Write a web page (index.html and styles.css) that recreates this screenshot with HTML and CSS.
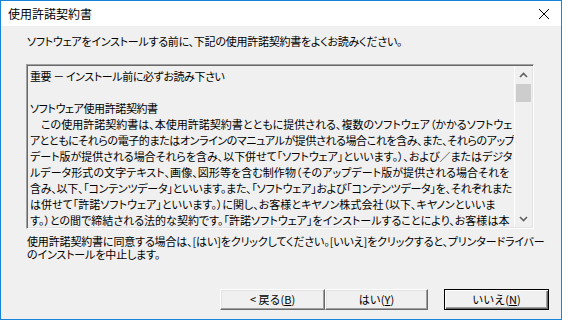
FILE: index.html
```html
<!DOCTYPE html>
<html lang="ja">
<head>
  <meta charset="UTF-8" />
  <title>使用許諾契約書</title>
  <link rel="stylesheet" href="styles.css">
</head>
<body>

<div class="window">
  <div class="titlebar">
    <span class="title">使用許諾契約書</span>
    <svg class="close" width="12" height="12" viewBox="0 0 12 12">
      <path d="M1 1 L11 11 M11 1 L1 11" stroke="#000" stroke-width="1" fill="none" />
    </svg>
  </div>

  <div class="client">
    <p class="intro">ソフトウェアをインストールする前に、下記の使用許諾契約書をよくお読みください。</p>

    <div class="license">
      <div class="license-text">
        <div class="line">重要 － インストール前に必ずお読み下さい</div>
        <div class="line">&nbsp;</div>
        <div class="line">ソフトウェア使用許諾契約書</div>
        <div class="line full">　この使用許諾契約書は、本使用許諾契約書とともに提供される、複数のソフトウェア（かかるソフトウェ</div>
        <div class="line full">アとともにそれらの電子的またはオンラインのマニュアルが提供される場合これを含み、また、それらのアップ</div>
        <div class="line full">デート版が提供される場合それらを含み、以下併せて「ソフトウェア」といいます。）、および／またはデジタ</div>
        <div class="line full short">ルデータ形式の文字テキスト、画像、図形等を含む制作物（そのアップデート版が提供される場合それを</div>
        <div class="line full">含み、以下、「コンテンツデータ」といいます。また、「ソフトウェア」および「コンテンツデータ」を、それぞれまた</div>
        <div class="line full shorter">は併せて「許諾ソフトウェア」といいます。）に関し、お客様とキヤノン株式会社（以下、キヤノンといいま</div>
        <div class="line full short">す。）との間で締結される法的な契約です。「許諾ソフトウェア」をインストールすることにより、お客様は本</div>
      </div>
      <div class="scrollbar">
        <div class="arrow">
          <svg width="9" height="6" viewBox="0 0 9 6"><path d="M1 5 L4.5 1.5 L8 5" stroke="#606060" stroke-width="1.6" fill="none" /></svg>
        </div>
        <div class="track"><div class="thumb"></div></div>
        <div class="arrow">
          <svg width="9" height="6" viewBox="0 0 9 6"><path d="M1 1 L4.5 4.5 L8 1" stroke="#606060" stroke-width="1.6" fill="none" /></svg>
        </div>
      </div>
    </div>

    <p class="note">使用許諾契約書に同意する場合は、[はい]をクリックしてください。[いいえ]をクリックすると、プリンタードライバー<br>のインストールを中止します。</p>

    <div class="buttons">
      <button class="btn btn-back">&lt; 戻る(<u>B</u>)</button>
      <button class="btn btn-yes">はい(<u>Y</u>)</button>
      <button class="btn btn-no">いいえ(<u>N</u>)</button>
    </div>
  </div>
</div>

</body>
</html>
```

FILE: styles.css
```css
body {
  margin: 0;
  font-family: "Noto Sans CJK JP", "Noto Sans", sans-serif;
  font-size: 11px;
  color: #000;
  font-feature-settings: "palt";
}
.window {
  width: 562px;
  height: 320px;
  box-sizing: border-box;
  border: 1px solid #1883d7;
  background: #f0f0f0;
  display: flex;
  flex-direction: column;
}
.titlebar {
  height: 25px;
  background: #fff;
  display: flex;
  align-items: center;
  justify-content: space-between;
  padding: 0 11px 0 7px;
}
.title {
  font-size: 12px;
  line-height: 16px;
  font-feature-settings: normal;
}
.close {
  display: block;
}
.client {
  flex: 1;
  padding: 7px 0 0 25px;
}
.intro {
  margin: 0 0 15px 1px;
  line-height: 16px;
  letter-spacing: -0.25px;
  white-space: nowrap;
}
.license {
  width: 508px;
  height: 165px;
  box-sizing: border-box;
  border: 1px solid;
  border-color: #a0a0a0 #fff #fff #a0a0a0;
  box-shadow: inset 1px 1px 0 #696969, inset -1px -1px 0 #e3e3e3;
  display: flex;
  overflow: hidden;
}
.license-text {
  flex: 1;
  min-width: 0;
  padding: 3px 2px 0 3px;
  line-height: 16px;
  letter-spacing: -0.4px;
  overflow: hidden;
}
.line {
  white-space: nowrap;
}
.line.full {
  text-align: justify;
  text-align-last: justify;
  text-justify: inter-character;
}
.line.short {
  margin-right: 3px;
}
.line.shorter {
  margin-right: 17px;
}
.scrollbar {
  width: 17px;
  flex-shrink: 0;
  margin: 1px 1px 1px 0;
  border-left: 1px solid #fff;
  display: flex;
  flex-direction: column;
  background: #f0f0f0;
}
.arrow {
  height: 17px;
  display: flex;
  align-items: center;
  justify-content: center;
}
.track {
  flex: 1;
}
.thumb {
  height: 18px;
  margin: 1px 1px 0 1px;
  background: #cdcdcd;
}
.note {
  margin: 6px 0 0 1px;
  line-height: 13px;
  letter-spacing: -0.15px;
  white-space: nowrap;
}
.buttons {
  display: flex;
  justify-content: flex-end;
  margin-top: 28px;
  padding-right: 12px;
}
.btn {
  height: 21px;
  padding: 0;
  font-family: inherit;
  font-size: 11px;
  line-height: 17px;
  color: #000;
  background: #f0f0f0;
  border: 1px solid;
  border-color: #fff #696969 #696969 #fff;
  box-shadow: inset -1px -1px 0 #a0a0a0, inset 1px 1px 0 #e3e3e3;
}
.btn-back {
  width: 105px;
}
.btn-yes {
  width: 103px;
}
.btn-no {
  width: 105px;
  margin-left: 16px;
  border-color: #000;
  box-shadow: inset 1px 1px 0 #fff, inset -1px -1px 0 #696969, inset -2px -2px 0 #a0a0a0;
}
```
